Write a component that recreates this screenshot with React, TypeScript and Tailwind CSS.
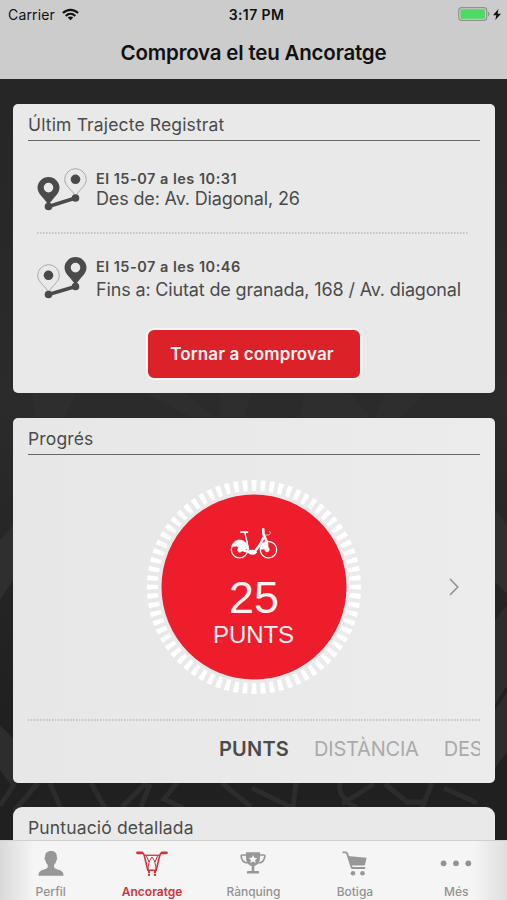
import type { ReactNode } from "react";
import clsx from "clsx";

const tripPoints = [
  { time: "El 15-07 a les 10:31", place: "Des de: Av. Diagonal, 26", start: true },
  { time: "El 15-07 a les 10:46", place: "Fins a: Ciutat de granada, 168 / Av. diagonal", start: false },
];

const tabs = [
  { label: "Perfil", icon: <PersonIcon /> },
  { label: "Ancoratge", icon: <HandlebarIcon />, active: true },
  { label: "Rànquing", icon: <TrophyIcon /> },
  { label: "Botiga", icon: <CartIcon /> },
  { label: "Més", icon: <MoreIcon /> },
];

const ticks = Array.from({ length: 72 }, (_, i) => i * 5);

function PersonIcon() {
  return (
    <svg width="26" height="25" viewBox="0 0 26 25" fill="#979797">
      <path d="M13 0C8.800 0 6.800 2.400 7 6.200c-.8.2-.6 2.200.3 3 .5 2.200 1.300 3.600 2.400 4.600v2.600c-.6 1.300-3.300 1.800-5.400 2.500C1.700 19.900.4 21.500.4 24.800h25.200c0-3.300-1.300-4.900-4.100-5.900-2.100-.7-4.800-1.200-5.400-2.500v-2.600c1.100-1 1.900-2.400 2.400-4.600.9-.8 1.100-2.800.3-3C19.200 2.400 17.200 0 13 0Z" />
    </svg>
  );
}

function HandlebarIcon() {
  return (
    <svg width="32" height="25" viewBox="0 0 32 25" fill="none" stroke="#d2333a">
      <path d="M1.500 1.800h4.500M30.500 1.800h-4.500" strokeWidth="2.800" strokeLinecap="round" />
      <path d="M5 1.800c2.200.1 2.800 1 3.200 2.400l3.600 15h8.400l3.600-15c.4-1.400 1-2.300 3.200-2.400" strokeWidth="1.600" />
      <path d="M8.200 4.300h15.600" strokeWidth="1.300" />
      <path d="M12 19c0-5 1.500-10.500 4-13 2.500 2.500 4 8 4 13M10.500 5 13 11M21.500 5 19 11" strokeWidth="1" />
      <path d="M13 19.500V25M19 19.500V25" strokeWidth="2" strokeDasharray="2.600 .6" />
    </svg>
  );
}

function TrophyIcon() {
  return (
    <svg width="26" height="23" viewBox="0 0 26 23">
      <path
        d="M6.500 3H2.300c-.8 0-1.200.4-1.100 1.200.3 3.800 2.400 6.500 6.500 6.800M19.500 3h4.200c.8 0 1.200.4 1.100 1.200-.3 3.800-2.400 6.500-6.500 6.800"
        fill="none"
        stroke="#979797"
        strokeWidth="1.700"
      />
      <path
        d="M6 .3h14v4.900c0 4.500-1.800 7.600-5.700 8.700v5.200h3.500c.9 0 1.300.5 1.300 1.300v1.200H6.900v-1.200c0-.8.4-1.300 1.300-1.300h3.500v-5.200C7.800 12.800 6 9.700 6 5.200Z"
        fill="#979797"
      />
      <path d="m13 3 1.300 2.700 3 .4-2.200 2 .6 3-2.700-1.500-2.700 1.500.6-3-2.200-2 3-.4Z" fill="#f5f5f5" />
    </svg>
  );
}

function CartIcon() {
  return (
    <svg width="25" height="25" viewBox="0 0 25 25">
      <path
        d="M1.200 1.400h2.500c.7 0 1.100.3 1.400 1l4.400 13.700c.2.600.6.900 1.200.9h11.800"
        fill="none"
        stroke="#979797"
        strokeWidth="1.800"
        strokeLinecap="round"
      />
      <path d="M5.600 4.900 24 6.700c.4 0 .6.300.5.800l-1.500 6.300c-.1.500-.4.700-.9.700H8.900Z" fill="#979797" />
      <circle cx="11" cy="22.300" r="2.300" fill="#979797" />
      <circle cx="20.500" cy="22.300" r="2.300" fill="#979797" />
    </svg>
  );
}

function MoreIcon() {
  return (
    <svg width="32" height="25" viewBox="0 0 32 25" fill="#929292">
      <circle cx="3.600" cy="12.300" r="2.900" />
      <circle cx="16" cy="12.300" r="2.900" />
      <circle cx="28.300" cy="12.300" r="2.900" />
    </svg>
  );
}

function RouteIcon({ start }: { start: boolean }) {
  // the filled pin marks the end of the trip this row is about
  const left = { x: 11.5, y: start ? 9 : 9.5 };
  const right = { x: 38.5, y: start ? 0.5 : 2 };
  const solid = start ? left : right;
  const hollow = start ? right : left;
  const leftEnd = start ? 38.5 : 39.5;
  const rightEnd = start ? 30 : 31.5;
  return (
    <svg width="51" height="44" viewBox="0 0 51 44" className="shrink-0">
      <g transform={`translate(${hollow.x} ${hollow.y})`}>
        <path
          d="M0 28.500C-2 22-10.800 18-10.800 11A10.800 10.800 0 0 1 10.800 11C10.800 18 2 22 0 28.500Z"
          fill="none"
          stroke="#a8a8a8"
          strokeWidth="1"
        />
        <circle cx="0" cy="10.800" r="4.800" fill="#4a4a4a" />
      </g>
      <path
        transform={`translate(${solid.x} ${solid.y})`}
        fillRule="evenodd"
        d="M0 29C-2 22.500-11 18-11 10.800A11 10.800 0 0 1 11 10.800C11 18 2 22.500 0 29ZM0 5.800a4.800 4.800 0 1 0 0 9.600a4.800 4.800 0 1 0 0-9.600Z"
        fill="#4a4a4a"
      />
      <path d={`M11.500 ${leftEnd} 38.500 ${rightEnd}`} stroke="#4a4a4a" strokeWidth="3.500" />
      <circle cx="11.500" cy={leftEnd} r="3.800" fill="#4a4a4a" />
      <circle cx="38.500" cy={rightEnd} r="3.800" fill="#4a4a4a" />
    </svg>
  );
}

function BikeIcon() {
  return (
    <svg width="48" height="33" viewBox="0 0 48 33" fill="none" stroke="#fff">
      <circle cx="9.500" cy="22.700" r="8.200" strokeWidth="1.300" />
      <circle cx="38.500" cy="22.700" r="8.200" strokeWidth="1.300" />
      <path d="M1.300 20C3 14.500 7 12.500 10.500 13c4.500.6 7 4 7.800 8.200l-6.300 2.800c-.8 1.400-3 1.600-4 .3-1-1.200-.4-2.800.8-3.300L6.500 19Z" fill="#fff" strokeWidth=".5" />
      <path d="M30 22.500c.3-4.500 3.500-8 7.500-8.500l.8 6.500c1.500.8 1.500 3.200 0 4-1.300.8-3 .1-3.300-1.300l-1-1.200Z" fill="#fff" strokeWidth=".5" />
      <path d="M12 22.500c3 1.800 7 2.500 11.500 2.500 4-3 7.500-8.500 10-14.500" strokeWidth="2.500" strokeLinecap="round" />
      <path d="m15 6 3.700 17" strokeWidth="1.500" />
      <path d="M11 5.200h6.500" strokeWidth="1.700" strokeLinecap="round" />
      <path d="m33.200 2.200.3 5.100 3.500 8" strokeWidth="2.600" strokeLinecap="round" />
      <path d="M34 8h4.500c2 0 2.500-3 .8-4" strokeWidth=".7" />
      <ellipse cx="22.500" cy="25.200" rx="4" ry="2" fill="#fff" />
    </svg>
  );
}

function Backdrop() {
  return (
    <svg
      className="pointer-events-none absolute inset-0 -z-10"
      width="507"
      height="900"
      viewBox="0 0 507 900"
      fill="none"
    >
      <defs>
        <linearGradient id="shade" x1="0" y1="0" x2="0" y2="1">
          <stop offset="0.100" stopColor="#262626" />
          <stop offset="0.450" stopColor="#2b2b2b" />
          <stop offset="0.800" stopColor="#202020" />
        </linearGradient>
      </defs>
      <rect width="507" height="900" fill="url(#shade)" />
      <path
        d="M32 393h45l-12 24H35ZM145 393h40l30 24h-25ZM220 393h32l-8 24h-24ZM305 393h45l20 24h-70ZM385 393h40l-22 24h-28Z"
        fill="#2e2e2e"
      />
      <path d="M0 540l13-15v55L0 600ZM495 510l12 14v70l-12-12Z" fill="#2f2f2f" />
      <path d="M0 725 13 738v50L0 770ZM495 620l12-15v80l-12 20ZM495 710l12-18v60l-12 16Z" fill="#2d2d2d" />
      <path
        d="m0 806 15-23M38 783l-24 28M50 783l11 26M91 783l14 25M122 807l24-24M150 784l-9 23M177 783l-13 16 19 9M222 783l29 24M252 788l41 20 3-25M340 783c-3 12 8 20 17 25M342 804l32-20M385 784l22 18h20M432 783l-10 25M444 788l33 15"
        stroke="#2c2c2c"
        strokeWidth="5"
      />
    </svg>
  );
}

function Card({ title, className, children }: { title: string; className?: string; children?: ReactNode }) {
  return (
    <section className={clsx("flex shrink-0 flex-col rounded-[5px] bg-[#e9e9e9] px-[15px]", className)}>
      <h2 className="h-[37px] border-b border-[#666] pt-2.5 text-[17.5px] leading-[21px] tracking-[0.15px] text-[#4b4b4b]">
        {title}
      </h2>
      {children}
    </section>
  );
}

function DottedRule() {
  return (
    <svg width="100%" height="2" className="block shrink-0">
      <line x1="0" x2="100%" y1="1" y2="1" stroke="#b9b9b9" strokeWidth="1.500" strokeDasharray="1.500 1.500" />
    </svg>
  );
}

function StatusBar() {
  return (
    <div className="grid h-7 grid-cols-3 items-center pr-[6px] pl-2 text-[14px]">
      <div className="flex items-center gap-[7px]">
        <span className="tracking-[0.15px]">Carrier</span>
        <svg width="17" height="13" viewBox="0 0 18 13" fill="none" stroke="#111" strokeWidth="2.300">
          <path d="M1 5c4.500-4.500 11.500-4.500 16 0M4 8c2.900-2.900 7.100-2.900 10 0" />
          <path d="m9 12.700-2.900-3c1.600-1.500 4.200-1.500 5.800 0Z" fill="#111" stroke="none" />
        </svg>
      </div>
      <div className="pl-1 text-center font-semibold tracking-[0.4px]">3:17 PM</div>
      <div className="flex items-center justify-end gap-[3px]">
        <svg width="32" height="14" viewBox="0 0 32 14">
          <rect x=".7" y=".7" width="28" height="12.600" rx="2.800" fill="none" stroke="#929292" strokeWidth="1.200" />
          <rect x="2.500" y="2.300" width="24.400" height="9.400" rx="1" fill="#4cd964" />
          <path d="M30 4.700c2 .7 2 3.900 0 4.600Z" fill="#929292" />
        </svg>
        <svg width="8" height="11" viewBox="0 0 8 11" fill="#111">
          <path d="M5.500 0 0 6.200h3.300L2.300 11 8 4.700H4.600Z" />
        </svg>
      </div>
    </div>
  );
}

export default function App() {
  return (
    <div className="relative isolate flex h-[900px] w-[507px] flex-col overflow-hidden font-['Inter',sans-serif] text-[#111]">
      <Backdrop />
      <header className="h-[79px] shrink-0 bg-[#ccc]">
        <StatusBar />
        <h1 className="pt-3 text-center text-[20.5px] leading-[25px] font-semibold tracking-[-0.19px]">
          Comprova el teu Ancoratge
        </h1>
      </header>

      <main className="flex min-h-0 flex-1 flex-col overflow-hidden pt-[25px] pr-3 pl-[13px]">
        <Card title="Últim Trajecte Registrat" className="mb-[25px] h-[289px]">
          {tripPoints.map((point) => (
            <div key={point.time} className="flex flex-col pr-3 pl-[9px]">
              <div
                className={clsx(
                  "flex items-start gap-[8px] text-[#4b4b4b]",
                  point.start ? "h-[91px] pt-[27px]" : "h-[86px] pt-[21px]"
                )}
              >
                <RouteIcon start={point.start} />
                <div className={clsx("whitespace-nowrap", point.start ? "pt-px" : "pt-0.5")}>
                  <div className="text-[14.5px] leading-[20px] font-semibold tracking-[0.5px]">{point.time}</div>
                  <div
                    className={clsx(
                      "text-[18px] leading-[22px] tracking-[-0.15px]",
                      point.start ? "-mt-px" : "mt-0.5"
                    )}
                  >
                    {point.place}
                  </div>
                </div>
              </div>
              {point.start && <DottedRule />}
            </div>
          ))}
          <button className="mt-2 h-[52px] w-[216px] self-center rounded-[8px] border-2 border-[#fbf5f5] bg-[#dc2228] pt-0.5 pr-1 text-[17px] font-semibold tracking-[0.12px] text-[#fff3f3]">
            Tornar a comprovar
          </button>
        </Card>

        <Card title="Progrés" className="mb-[24px] h-[365px] bg-linear-to-r from-[#e7e7e7] to-[#ececec]">
          <div className="relative flex h-[264px] items-center justify-center">
            <svg width="214" height="214" viewBox="-107 -107 214 214" className="absolute">
              {ticks.map((deg) => (
                <path key={deg} d="M-2-96-2.600-107h5.200L2-96Z" fill="#fff" transform={`rotate(${deg})`} />
              ))}
              <circle r="92.500" fill="#ee1d2c" />
            </svg>
            <div className="relative flex flex-col items-center font-['Liberation_Sans',sans-serif] text-[#fff1f1]">
              <BikeIcon />
              <div className="mt-[13px] text-[45px] leading-[50px]">25</div>
              <div className="-mt-px pr-px text-[24px] leading-[26px] tracking-[-0.1px]">PUNTS</div>
            </div>
            <svg
              width="10"
              height="18"
              viewBox="0 0 10 18"
              fill="none"
              stroke="#929292"
              strokeWidth="1.600"
              className="absolute right-[21px]"
            >
              <path d="m1 1 7.800 8L1 17" />
            </svg>
          </div>
          <DottedRule />
          <div className="flex h-[55px] items-center gap-[25px] overflow-hidden pl-[191px] text-[20px] whitespace-nowrap text-[#aaa]">
            <span className="font-semibold tracking-[0.2px] text-[#4b4b4b]">PUNTS</span>
            <span className="tracking-[-0.2px]">DISTÀNCIA</span>
            <span className="tracking-[-0.2px]">DES</span>
          </div>
        </Card>

        <Card title="Puntuació detallada" className="h-24 rounded-[9px]" />
      </main>

      <nav className="grid h-[60px] shrink-0 grid-cols-5 border-t border-[#d0d0d0] bg-[linear-gradient(90deg,#d9d9d9_0,#f5f5f5_34px,#f5f5f5_474px,#dedede_507px)]">
        {tabs.map((tab) => (
          <div
            key={tab.label}
            className={clsx(
              "flex flex-col items-center pt-2.5 text-[12px]",
              tab.active ? "font-semibold text-[#d2333a]" : "font-medium text-[#929292]"
            )}
          >
            <div className="flex h-[25px] items-center">{tab.icon}</div>
            <span className="mt-2 leading-[16px]">{tab.label}</span>
          </div>
        ))}
      </nav>
    </div>
  );
}
